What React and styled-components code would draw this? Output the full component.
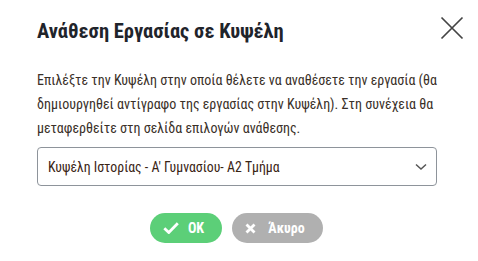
import React from "react";
import styled, { createGlobalStyle } from "styled-components";

const Global = createGlobalStyle`
  html, body { margin: 0; padding: 0; background: #fff; }
  body { font-family: "Roboto Condensed", Roboto, sans-serif; }
  * { box-sizing: border-box; }
`;

const Modal = styled.div`
  width: 478px;
  height: 261px;
  background: #fff;
  padding: 19px 14px 0 37px;
  display: flex;
  flex-direction: column;
`;

const Header = styled.div`
  display: flex;
  align-items: flex-start;
  justify-content: space-between;
`;

const Title = styled.h2`
  margin: 0;
  font-size: 20.5px;
  line-height: 24px;
  font-weight: 700;
  color: #1f242b;
`;

const Close = styled.button`
  border: 0;
  background: none;
  padding: 0;
  margin-top: -3px;
  width: 24px;
  height: 24px;
  display: flex;
  align-items: center;
  justify-content: center;
  cursor: pointer;
`;

const Body = styled.p`
  margin: 25px 0 0;
  font-size: 14px;
  line-height: 24px;
  color: #3a3028;
`;

const Select = styled.div`
  margin-top: 7px;
  width: 400px;
  height: 39px;
  border: 1px solid #8e949b;
  border-radius: 4px;
  display: flex;
  align-items: center;
  justify-content: space-between;
  padding: 0 9px 0 10px;
  font-size: 13.8px;
  color: #3a2414;
`;

const Actions = styled.div`
  margin-top: 27px;
  display: flex;
  gap: 10px;
  padding-left: 113px;
`;

const Btn = styled.button`
  height: 30px;
  width: ${(p) => p.w}px;
  border: 0;
  border-radius: 15px;
  background: ${(p) => p.bg};
  color: #fff;
  font-family: "Roboto Condensed", Roboto, sans-serif;
  font-weight: 700;
  font-size: 14px;
  display: flex;
  align-items: center;
  justify-content: center;
  gap: ${(p) => p.gap}px;
  padding: 0 5px 0 0;
`;

export default function App() {
  return (
    <>
      <Global />
      <Modal>
        <Header>
          <Title>Ανάθεση Εργασίας σε Κυψέλη</Title>
          <Close aria-label="close">
            <svg width="24" height="24" viewBox="0 0 24 24">
              <path d="M1.5 1.5 L22.5 22.5 M22.5 1.5 L1.5 22.5" stroke="#444" strokeWidth="1.7" />
            </svg>
          </Close>
        </Header>
        <Body>
          Επιλέξτε την Κυψέλη στην οποία θέλετε να αναθέσετε την εργασία (θα
          δημιουργηθεί αντίγραφο της εργασίας στην Κυψέλη). Στη συνέχεια θα
          μεταφερθείτε στη σελίδα επιλογών ανάθεσης.
        </Body>
        <Select>
          <span>Κυψέλη Ιστορίας - Α' Γυμνασίου- Α2 Τμήμα</span>
          <svg width="12" height="8" viewBox="0 0 12 8">
            <path d="M1 1.5 L6 6 L11 1.5" fill="none" stroke="#555" strokeWidth="1.5" />
          </svg>
        </Select>
        <Actions>
          <Btn w={72} bg="#5ccf78" gap={9}>
            <svg width="16" height="12" viewBox="0 0 16 12">
              <path d="M1.3 6.2 L5.8 10.5 L14.8 1.3" fill="none" stroke="#fff" strokeWidth="2.8" />
            </svg>
            OK
          </Btn>
          <Btn w={91} bg="#b0b0b0" gap={12}>
            <svg width="11" height="11" viewBox="0 0 11 11">
              <path d="M1.5 1.5 L9.5 9.5 M9.5 1.5 L1.5 9.5" fill="none" stroke="#fff" strokeWidth="2.8" />
            </svg>
            Άκυρο
          </Btn>
        </Actions>
      </Modal>
    </>
  );
}
